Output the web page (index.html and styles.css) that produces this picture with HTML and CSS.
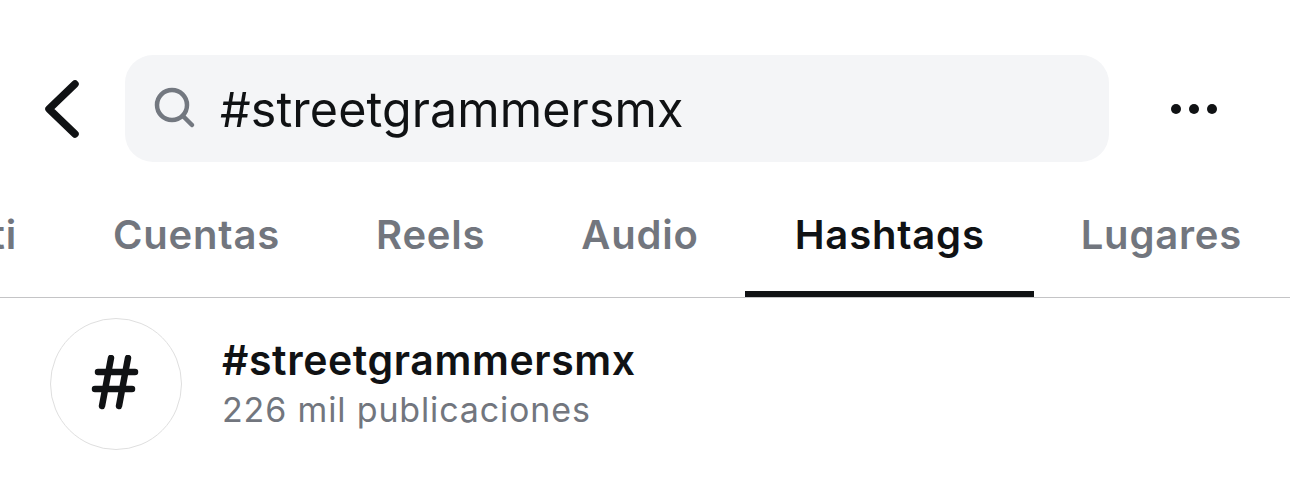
FILE: index.html
```html
<!DOCTYPE html>
<html lang="es">
<head>
  <meta charset="UTF-8">
  <title>Buscar - #streetgrammersmx</title>
  <link rel="stylesheet" href="styles.css">
</head>
<body>
  <header class="topbar">
    <button class="back" aria-label="Volver">
      <svg width="36" height="58" viewBox="0 0 36 58"><path d="M31 4 L5 29 L31 54" fill="none" stroke="#101214" stroke-width="7.500" stroke-linecap="round" stroke-linejoin="round"/></svg>
    </button>
    <div class="search">
      <svg class="search-icon" width="42" height="42" viewBox="0 0 42 42"><circle cx="18" cy="18" r="15" fill="none" stroke="#737880" stroke-width="4.500"/><path d="M29 29 L38 38" fill="none" stroke="#737880" stroke-width="4.500" stroke-linecap="round"/></svg>
      <span class="query">#streetgrammersmx</span>
    </div>
    <div class="more" aria-label="Más">
      <span class="dot"></span>
      <span class="dot"></span>
      <span class="dot"></span>
    </div>
  </header>

  <nav class="tabs">
    <a class="tab">Para ti</a>
    <a class="tab">Cuentas</a>
    <a class="tab">Reels</a>
    <a class="tab">Audio</a>
    <a class="tab active">Hashtags</a>
    <a class="tab">Lugares</a>
  </nav>

  <div class="result">
    <div class="avatar">
      <svg width="50" height="58" viewBox="0 0 50 58"><path d="M20 3 L11 51 M37 3 L28 51 M7 17 L44 17 M4 34 L41 34" fill="none" stroke="#101214" stroke-width="6.500" stroke-linecap="round"/></svg>
    </div>
    <div class="info">
      <div class="name">#streetgrammersmx</div>
      <div class="count">226 mil publicaciones</div>
    </div>
  </div>
</body>
</html>
```

FILE: styles.css
```css
body {
  margin: 0;
  background: #ffffff;
  color: #101214;
  font-family: Inter, "Liberation Sans", sans-serif;
  overflow: hidden;
}
.topbar {
  display: flex;
  align-items: center;
  padding-top: 55px;
}
.back {
  width: 125px;
  height: 107px;
  padding: 0 0 0 44px;
  border: none;
  background: none;
  display: flex;
  align-items: center;
  flex-shrink: 0;
}
.search {
  width: 984px;
  height: 107px;
  box-sizing: border-box;
  padding-left: 29px;
  display: flex;
  align-items: center;
  gap: 24px;
  background: #f4f5f7;
  border-radius: 28px;
  flex-shrink: 0;
}
.search-icon {
  margin-top: -2px;
}
.query {
  padding-top: 2px;
  font-size: 48.400px;
  letter-spacing: 0.100px;
}
.more {
  flex: 1;
  display: flex;
  justify-content: center;
  gap: 8px;
  padding-right: 11px;
}
.dot {
  width: 10px;
  height: 10px;
  border-radius: 50%;
  background: #101214;
}
.tabs {
  display: flex;
  justify-content: flex-end;
  margin-top: 13px;
  height: 122px;
  border-bottom: 1px solid #c4c4c6;
  overflow: hidden;
}
.tab {
  flex-shrink: 0;
  padding: 35px 48px 0;
  font-size: 40px;
  font-weight: 600;
  letter-spacing: 0.800px;
  color: #72767e;
}
.tab.active {
  padding: 35px 49.500px 0;
  margin: 0 -1.500px;
  color: #101214;
  box-shadow: inset 0 -6px 0 #101214;
}
.result {
  display: flex;
  align-items: center;
  gap: 40px;
  padding: 20px 0 0 50px;
}
.avatar {
  width: 132px;
  height: 132px;
  box-sizing: border-box;
  border: 1.500px solid #dfdfdf;
  border-radius: 50%;
  display: flex;
  align-items: center;
  justify-content: center;
}
.name {
  font-size: 41px;
  font-weight: 600;
  letter-spacing: 0.600px;
  line-height: 44px;
}
.count {
  margin-top: 7px;
  font-size: 34px;
  letter-spacing: 0.850px;
  color: #72767e;
}
```
